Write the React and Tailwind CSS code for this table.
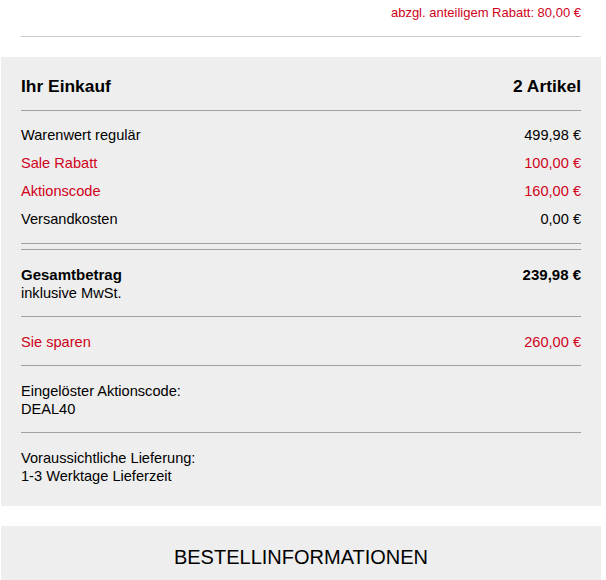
const rows = [
    { label: "Warenwert regulär", value: "499,98 €" },
    { label: "Sale Rabatt", value: "100,00 €", red: true },
    { label: "Aktionscode", value: "160,00 €", red: true },
    { label: "Versandkosten", value: "0,00 €" },
];

const App = () => {
    return (
        <div
            className="w-[600px] ml-px bg-white text-black"
            style={{ fontFamily: "'Liberation Sans', Arial, sans-serif" }}
        >
            {/* Rabatt hint */}
            <div className="px-5 pt-[5px]">
                <div className="text-right text-[13px] leading-4 text-[#d0021b]">
                    abzgl. anteiligem Rabatt: 80,00 €
                </div>
                <div className="mt-[15px] border-t border-[#cccccc]" />
            </div>

            {/* Ihr Einkauf */}
            <div className="mt-5 bg-[#eeeeee] px-5 pt-[19px] pb-[21px]">
                <div className="flex items-center justify-between text-[17.4px] leading-5 font-bold">
                    <span>Ihr Einkauf</span>
                    <span>2 Artikel</span>
                </div>
                <div className="mt-[14px] border-t border-[#a0a0a0]" />

                <div className="pt-[11px] text-[14.6px]">
                    {rows.map((row) => (
                        <div
                            key={row.label}
                            className={`flex h-7 items-center justify-between ${row.red ? "text-[#d0021b]" : ""}`}
                        >
                            <span>{row.label}</span>
                            <span>{row.value}</span>
                        </div>
                    ))}
                </div>

                <div className="mt-[9px] border-t border-[#a0a0a0]" />
                <div className="mt-[5px] border-t border-[#a0a0a0]" />

                <div className="pt-4 pb-[14px] text-[14.6px] leading-[18px] border-b border-[#a0a0a0]">
                    <div className="flex justify-between font-bold text-[15px]">
                        <span>Gesamtbetrag</span>
                        <span>239,98 €</span>
                    </div>
                    <div>inklusive MwSt.</div>
                </div>

                <div className="flex justify-between pt-4 pb-[14px] text-[14.6px] leading-[18px] text-[#d0021b] border-b border-[#a0a0a0]">
                    <span>Sie sparen</span>
                    <span>260,00 €</span>
                </div>

                <div className="pt-4 pb-[14px] text-[14.6px] leading-[18px] border-b border-[#a0a0a0]">
                    <div>Eingelöster Aktionscode:</div>
                    <div>DEAL40</div>
                </div>

                <div className="pt-4 text-[14.6px] leading-[18px]">
                    <div>Voraussichtliche Lieferung:</div>
                    <div>1-3 Werktage Lieferzeit</div>
                </div>
            </div>

            {/* Bestellinformationen */}
            <div className="mt-5 bg-[#eeeeee] pt-[19px] pb-5 text-center text-[20px] leading-6">
                BESTELLINFORMATIONEN
            </div>
        </div>
    );
};

export default App;
